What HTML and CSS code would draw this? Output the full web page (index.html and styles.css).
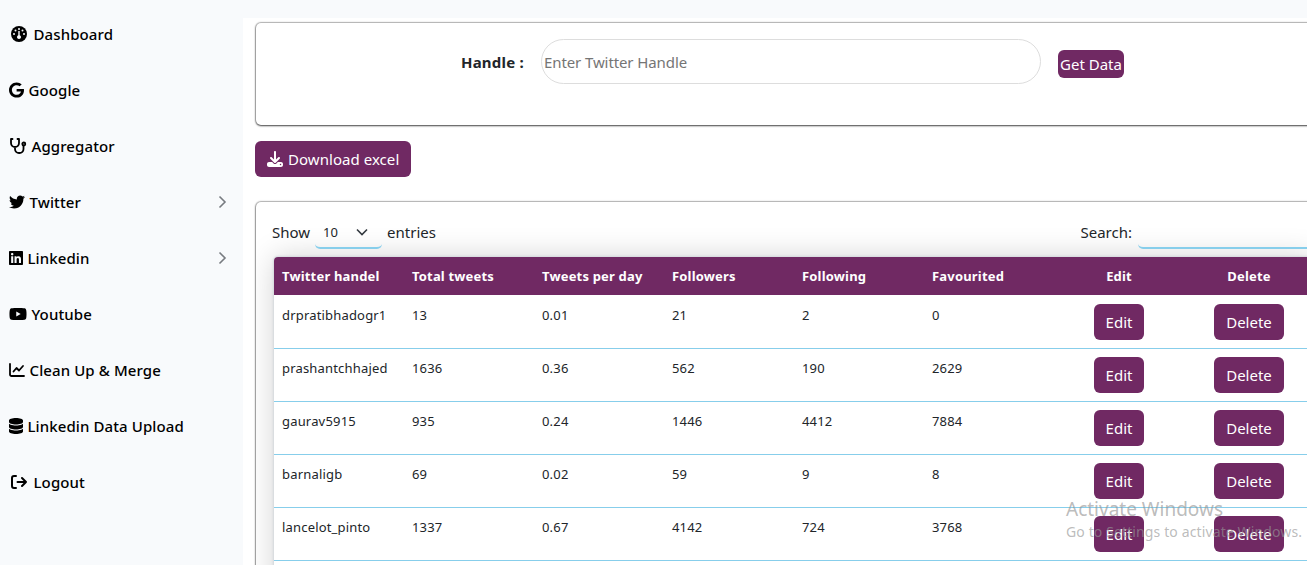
FILE: index.html
```html
<!DOCTYPE html>
<html lang="en">
<head>
<meta charset="utf-8">
<title>Twitter</title>
<link rel="stylesheet" href="styles.css">
</head>
<body>
<aside class="sidebar">
  <a class="item inset"><svg width="16" height="16" viewBox="0 0 16 16"><circle cx="8" cy="8" r="8"/><g fill="#f8fafc"><circle cx="8" cy="3" r="1"/><circle cx="4.5" cy="4.5" r="1"/><circle cx="3" cy="8" r="1"/><circle cx="13" cy="8" r="1"/><circle cx="11.5" cy="4.5" r="1"/><path d="M7.300 5h1.400v4.200a2 2 0 1 1-1.400 0z"/></g></svg><span class="label">Dashboard</span></a>
  <a class="item"><svg width="15" height="16" viewBox="0 0 488 512"><path d="M488 261.800C488 403.300 391.100 504 248 504 110.800 504 0 393.200 0 256S110.800 8 248 8c66.800 0 123 24.500 166.300 64.900l-67.500 64.900C258.500 52.600 94.300 116.600 94.300 256c0 86.500 69.100 156.600 153.700 156.600 98.200 0 135-70.400 140.800-106.900H248v-85.300h236.100c2.300 12.700 3.900 24.900 3.900 41.400z"/></svg><span class="label">Google</span></a>
  <a class="item"><svg width="18" height="16" viewBox="0 0 18 16" fill="none" stroke="#000" stroke-width="1.8" stroke-linecap="round" stroke-linejoin="round"><path d="M3.500 1H2v4a4 4 0 0 0 8 0V1H8.500M6 9.500v1.500a4 4 0 0 0 4 4h.500a4 4 0 0 0 4-4V7.500"/><circle cx="14.800" cy="6" r="1.500"/></svg><span class="label">Aggregator</span></a>
  <a class="item"><svg width="16" height="16" viewBox="0 0 512 512"><path d="M459.370 151.716c.325 4.548.325 9.097.325 13.645 0 138.720-105.583 298.558-298.558 298.558-59.452 0-114.680-17.219-161.137-47.106 8.447.974 16.568 1.299 25.340 1.299 49.055 0 94.213-16.568 130.274-44.832-46.132-.975-84.792-31.188-98.112-72.772 6.498.974 12.995 1.624 19.818 1.624 9.421 0 18.843-1.300 27.614-3.573-48.081-9.747-84.143-51.980-84.143-102.985v-1.299c13.969 7.797 30.214 12.670 47.431 13.319-28.264-18.843-46.781-51.005-46.781-87.391 0-19.492 5.197-37.360 14.294-52.954 51.655 63.675 129.300 105.258 216.365 109.807-1.624-7.797-2.599-15.918-2.599-24.040 0-57.828 46.782-104.934 104.934-104.934 30.213 0 57.502 12.670 76.670 33.137 23.715-4.548 46.456-13.320 66.599-25.340-7.798 24.366-24.366 44.833-46.132 57.827 21.117-2.273 41.584-8.122 60.426-16.243-14.292 20.791-32.161 39.308-52.628 54.253z"/></svg><span class="label">Twitter</span><svg class="chev" width="9" height="14" viewBox="0 0 9 14"><path d="M1.500 1.500 7 7l-5.500 5.500"/></svg></a>
  <a class="item"><svg width="14" height="16" viewBox="0 0 448 512"><path d="M416 32H31.900C14.300 32 0 46.500 0 64.300v383.400C0 465.500 14.300 480 31.900 480H416c17.600 0 32-14.500 32-32.300V64.300c0-17.800-14.400-32.300-32-32.300zM135.400 416H69V202.200h66.500V416zm-33.200-243c-21.300 0-38.500-17.300-38.500-38.500S80.900 96 102.200 96c21.200 0 38.500 17.300 38.500 38.500 0 21.300-17.200 38.500-38.500 38.500zm282.100 243h-66.400V312c0-24.800-.5-56.700-34.500-56.700-34.600 0-39.900 27-39.900 54.900V416h-66.400V202.200h63.700v29.200h.9c8.900-16.800 30.600-34.500 62.900-34.500 67.200 0 79.700 44.300 79.700 101.900V416z"/></svg><span class="label">Linkedin</span><svg class="chev" width="9" height="14" viewBox="0 0 9 14"><path d="M1.500 1.500 7 7l-5.500 5.500"/></svg></a>
  <a class="item"><svg width="18" height="16" viewBox="0 0 576 512"><path d="M549.655 124.083c-6.281-23.650-24.787-42.276-48.284-48.597C458.781 64 288 64 288 64S117.220 64 74.629 75.486c-23.497 6.322-42.003 24.947-48.284 48.597-11.412 42.867-11.412 132.305-11.412 132.305s0 89.438 11.412 132.305c6.281 23.650 24.787 41.500 48.284 47.821C117.220 448 288 448 288 448s170.780 0 213.371-11.486c23.497-6.321 42.003-24.171 48.284-47.821 11.412-42.867 11.412-132.305 11.412-132.305s0-89.438-11.412-132.305zm-317.510 213.508V175.185l142.739 81.205-142.739 81.201z"/></svg><span class="label">Youtube</span></a>
  <a class="item"><svg width="16" height="16" viewBox="0 0 16 16" fill="none" stroke="#000" stroke-width="1.800" stroke-linecap="round" stroke-linejoin="round"><path d="M1 2v10.500A1.500 1.500 0 0 0 2.500 14H15M4.500 9.500 7.500 6l2.500 2.500 4-4.500"/></svg><span class="label">Clean Up &amp; Merge</span></a>
  <a class="item"><svg width="14" height="16" viewBox="0 0 448 512"><path d="M448 80v48c0 44.200-100.300 80-224 80S0 172.200 0 128V80C0 35.800 100.300 0 224 0s224 35.800 224 80zm-54.800 134.700c20.800-7.400 39.900-16.900 54.800-28.600V288c0 44.200-100.300 80-224 80S0 332.200 0 288V186.100c14.900 11.800 34 21.200 54.800 28.600C99.700 230.700 159.500 240 224 240s124.300-9.300 169.200-25.300zM0 346.100c14.900 11.800 34 21.200 54.800 28.600C99.700 390.700 159.500 400 224 400s124.300-9.300 169.200-25.300c20.800-7.400 39.900-16.900 54.800-28.600V432c0 44.200-100.300 80-224 80S0 476.200 0 432v-85.900z"/></svg><span class="label">Linkedin Data Upload</span></a>
  <a class="item inset"><svg width="16" height="16" viewBox="0 0 16 16" fill="none" stroke="#000" stroke-width="2" stroke-linecap="round" stroke-linejoin="round"><path d="M5 2H3a2 2 0 0 0-2 2v8a2 2 0 0 0 2 2h2M6.500 8H15M11 4l4 4-4 4"/></svg><span class="label">Logout</span></a>
</aside>
<main class="main">
  <section class="card search-card">
    <label class="handle" for="handle">Handle :</label>
    <input class="handle-input" id="handle" placeholder="Enter Twitter Handle">
    <button class="btn get">Get Data</button>
  </section>
  <button class="btn download"><svg width="16" height="16" viewBox="0 0 512 512"><path d="M288 32c0-17.700-14.300-32-32-32s-32 14.300-32 32V274.700l-73.400-73.400c-12.500-12.500-32.800-12.500-45.300 0s-12.500 32.800 0 45.300l128 128c12.500 12.500 32.800 12.500 45.300 0l128-128c12.500-12.500 12.500-32.800 0-45.300s-32.800-12.500-45.300 0L288 274.700V32zM64 352c-35.300 0-64 28.700-64 64v32c0 35.300 28.700 64 64 64H448c35.300 0 64-28.700 64-64V416c0-35.300-28.700-64-64-64H346.500l-45.300 45.300c-25 25-65.500 25-90.500 0L165.500 352H64zm368 56a24 24 0 1 1 0 48 24 24 0 1 1 0-48z"/></svg><span class="btn-text">Download excel</span></button>
  <section class="card table-card">
    <div class="controls">
      <span>Show</span>
      <span class="select"><span>10</span><svg width="12" height="8" viewBox="0 0 12 8"><path d="M1 1.500 6 6.500l5-5"/></svg></span>
      <span>entries</span>
      <span class="search-label">Search:</span><input class="search" aria-label="Search">
    </div>
    <table class="grid">
      <thead><tr><th>Twitter handel</th><th>Total tweets</th><th>Tweets per day</th><th>Followers</th><th>Following</th><th>Favourited</th><th class="mid">Edit</th><th class="mid">Delete</th></tr></thead>
      <tbody>
        <tr><td>drpratibhadogr1</td><td>13</td><td>0.01</td><td>21</td><td>2</td><td>0</td><td class="mid"><button class="btn act edit">Edit</button></td><td class="mid"><button class="btn act del">Delete</button></td></tr>
        <tr><td>prashantchhajed</td><td>1636</td><td>0.36</td><td>562</td><td>190</td><td>2629</td><td class="mid"><button class="btn act edit">Edit</button></td><td class="mid"><button class="btn act del">Delete</button></td></tr>
        <tr><td>gaurav5915</td><td>935</td><td>0.24</td><td>1446</td><td>4412</td><td>7884</td><td class="mid"><button class="btn act edit">Edit</button></td><td class="mid"><button class="btn act del">Delete</button></td></tr>
        <tr><td>barnaligb</td><td>69</td><td>0.02</td><td>59</td><td>9</td><td>8</td><td class="mid"><button class="btn act edit">Edit</button></td><td class="mid"><button class="btn act del">Delete</button></td></tr>
        <tr><td>lancelot_pinto</td><td>1337</td><td>0.67</td><td>4142</td><td>724</td><td>3768</td><td class="mid"><button class="btn act edit">Edit</button></td><td class="mid"><button class="btn act del">Delete</button></td></tr>
        <tr><td></td><td></td><td></td><td></td><td></td><td></td><td></td><td></td></tr>
      </tbody>
    </table>
  </section>
</main>
<div class="watermark"><div class="wm-title">Activate Windows</div><div class="wm-sub">Go to Settings to activate Windows.</div></div>
</body>
</html>
```
FILE: styles.css
```css
* { box-sizing: border-box; }
body {
  margin: 0;
  width: 1307px;
  height: 565px;
  overflow: hidden;
  display: flex;
  background: #f8fafc;
  color: #212529;
  font: 15px/24px "Noto Sans", "Open Sans", sans-serif;
}
button, input { font: inherit; }
.sidebar { flex: none; width: 243px; padding-top: 6px; }
.item {
  display: flex;
  align-items: center;
  height: 56px;
  padding: 0 16px 0 9px;
  gap: 4.500px;
  color: #000;
  font-weight: 500;
  letter-spacing: .1px;
}
.item.inset { padding-left: 11px; gap: 6.500px; }
.item svg { flex: none; }
.item .chev { margin-left: auto; fill: none; stroke: #777b80; stroke-width: 1.6; }
.main {
  flex: none;
  width: 1064px;
  height: 547px;
  margin-top: 18px;
  padding: 5px 0 0 13px;
  background: #fff;
  overflow: hidden;
}
.card {
  width: 1080px;
  border-radius: 5px;
  background: #fff;
  box-shadow: 0 0 1px 1px rgba(0, 0, 0, .22), 0 0 2px 1px rgba(0, 0, 0, .1), 0 1px 2px rgba(0, 0, 0, .55);
}
.search-card { display: flex; height: 102px; padding: 16px 0 0 205px; }
.handle { width: 80px; padding-top: 11px; font-weight: 700; letter-spacing: .2px; }
.handle-input {
  width: 500px;
  height: 45px;
  padding: 1px 2px;
  border: 1px solid #ddd;
  border-radius: 23px;
  letter-spacing: -.1px;
}
.handle-input::placeholder { color: #757575; opacity: 1; }
.btn {
  display: block;
  border: 0;
  border-radius: 6px;
  background: #702963;
  color: #fff;
  padding: 0;
  white-space: nowrap;
}
.get { width: 66px; height: 28px; margin: 11px 0 0 17px; }
.download {
  display: flex;
  align-items: center;
  gap: 5px;
  width: 156px;
  height: 36px;
  margin: 16px 0 25px -1px;
  padding-left: 12px;
  letter-spacing: .05px;
}
.download svg { fill: #fff; }
.table-card { height: 400px; padding: 13px 0 0 16px; overflow: hidden; }
.controls { display: flex; height: 42px; line-height: 34px; }
.select {
  display: flex;
  align-items: center;
  justify-content: space-between;
  width: 67px;
  height: 34px;
  margin: 0 5px;
  padding: 2px 14px 0 8px;
  border-bottom: 2px solid #87ceeb;
  border-radius: 5px;
  font-size: 13px;
}
.select svg { fill: none; stroke: #343a40; stroke-width: 1.6; }
.search-label { margin-left: auto; }
.search {
  width: 198px;
  height: 34px;
  margin-left: 6px;
  border: 0;
  border-bottom: 2px solid #87ceeb;
  border-radius: 5px;
  background: transparent;
}
.grid {
  width: 1040px;
  margin-left: 2px;
  table-layout: fixed;
  border-collapse: separate;
  border-spacing: 0;
  border-radius: 4px 0 0 0;
  background: #fff;
  box-shadow: 0 0 2px 1px #d5dade, 0 0 30px rgba(0, 0, 0, .18);
  font-size: 13px;
  letter-spacing: .18px;
}
th, td { text-align: left; vertical-align: top; }
th { height: 38px; padding: 7px 8px 0; background: #702963; color: #fff; font-weight: 700; }
th:first-child { border-radius: 4px 0 0 0; }
td { height: 53px; padding: 7px 8px 0; border-top: 1px solid #87ceeb; }
tbody tr:first-child td { border-top-color: transparent; }
.mid { text-align: center; }
.act { height: 36px; margin: 1px auto 0; font-size: 15px; letter-spacing: 0; }
.edit { width: 50px; }
.del { width: 70px; }
.watermark { position: absolute; left: 1066px; top: 496px; color: rgba(150, 150, 150, .65); white-space: nowrap; }
.wm-title { font-size: 19px; line-height: 26px; }
.wm-sub { font-size: 14px; line-height: 20px; letter-spacing: .12px; }
```
